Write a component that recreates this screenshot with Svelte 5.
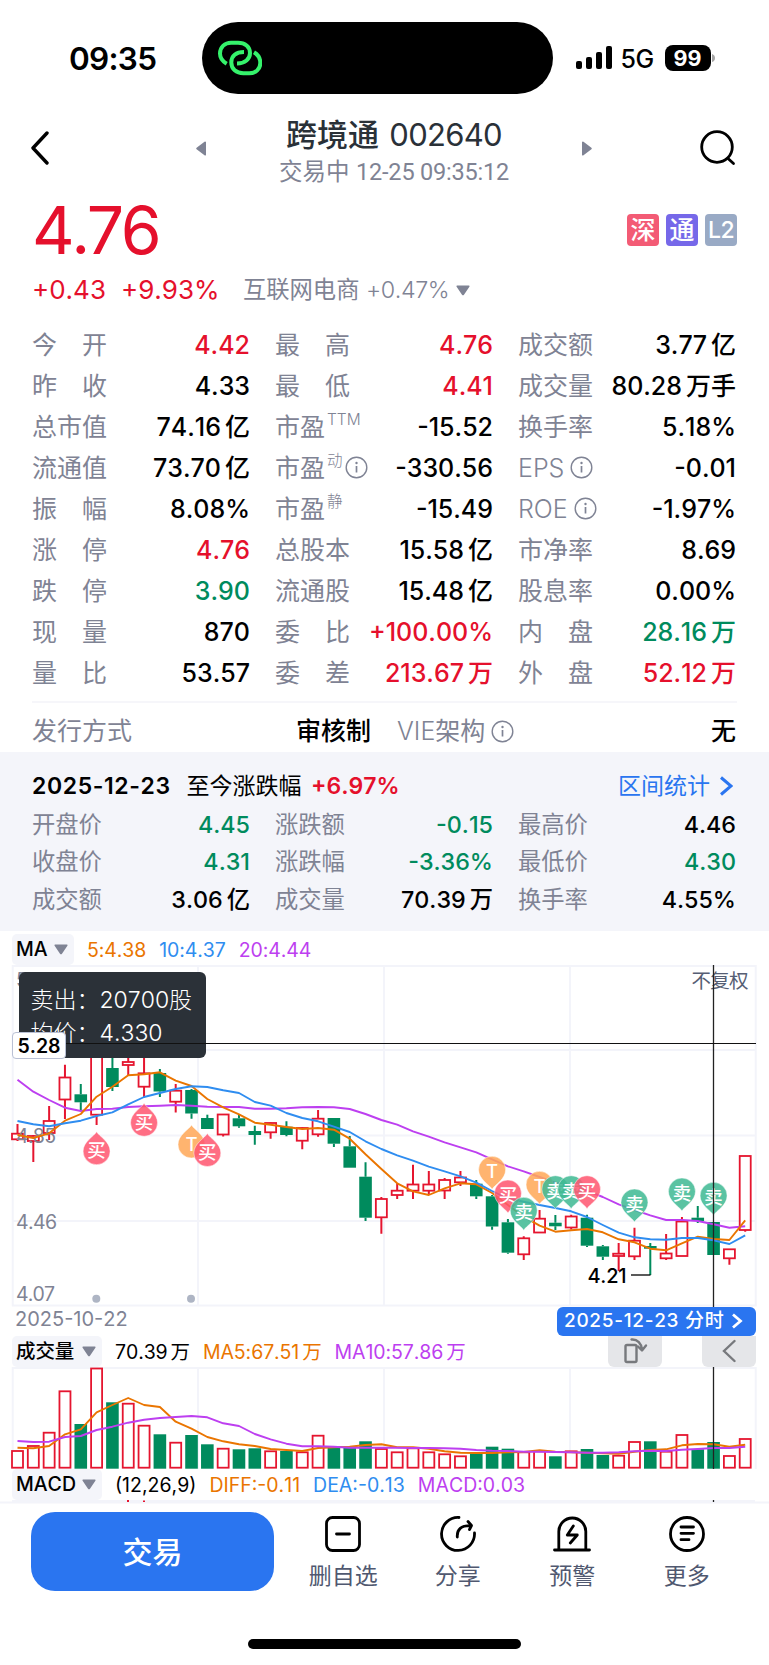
<script>
    // [label, value, colour, unit, superscript, info icon]
    let quotes = [
        ["今开", "4.42", "up"], ["最高", "4.76", "up"], ["成交额", "3.77", "", "亿"],
        ["昨收", "4.33", ""], ["最低", "4.41", "up"], ["成交量", "80.28", "", "万手"],
        ["总市值", "74.16", "", "亿"], ["市盈", "-15.52", "", "", "TTM"], ["换手率", "5.18%", ""],
        ["流通值", "73.70", "", "亿"], ["市盈", "-330.56", "", "", "动", true], ["EPS", "-0.01", "", "", "", true],
        ["振幅", "8.08%", ""], ["市盈", "-15.49", "", "", "静"], ["ROE", "-1.97%", "", "", "", true],
        ["涨停", "4.76", "up"], ["总股本", "15.58", "", "亿"], ["市净率", "8.69", ""],
        ["跌停", "3.90", "down"], ["流通股", "15.48", "", "亿"], ["股息率", "0.00%", ""],
        ["现量", "870", ""], ["委比", "+100.00%", "up"], ["内盘", "28.16", "down", "万"],
        ["量比", "53.57", ""], ["委差", "213.67", "up", "万"], ["外盘", "52.12", "up", "万"],
    ];

    let dayStats = [
        ["开盘价", "4.45", "down"], ["涨跌额", "-0.15", "down"], ["最高价", "4.46", ""],
        ["收盘价", "4.31", "down"], ["涨跌幅", "-3.36%", "down"], ["最低价", "4.30", "down"],
        ["成交额", "3.06", "", "亿"], ["成交量", "70.39", "", "万"], ["换手率", "4.55%", ""],
    ];

    // [rising, high, body top, body bottom, low, volume top]
    let candles = [
        [1, 1124, 1133.7, 1139.3, 1141, 1451], [1, 1135, 1136, 1141, 1162, 1446], [1, 1106, 1121, 1133, 1140, 1432.7],
        [1, 1064.7, 1077.5, 1099.5, 1119, 1391.3], [0, 1084, 1094.3, 1102.3, 1110, 1424], [1, 1040, 1042, 1114.7, 1125, 1368.5],
        [0, 1045, 1068, 1087, 1091, 1402.3], [1, 1050, 1062, 1065, 1075, 1403.7], [1, 1058, 1073.3, 1086.7, 1097, 1425.7],
        [0, 1069, 1073, 1091.5, 1097, 1434.3], [1, 1084, 1090.7, 1101.7, 1112.5, 1442.7], [0, 1089, 1090, 1113.5, 1118.7, 1435],
        [0, 1114.7, 1118, 1129, 1129, 1444.3], [1, 1114, 1114.5, 1134.5, 1136.5, 1448.7], [0, 1115, 1118.3, 1126.3, 1127.7, 1449.3],
        [0, 1125.7, 1131, 1135, 1144.7, 1448.3], [1, 1122.5, 1123, 1132.3, 1138.7, 1451.3], [0, 1121.3, 1126.7, 1135, 1136.3, 1451],
        [1, 1127.5, 1128, 1140.7, 1149.3, 1452.3], [1, 1110, 1118.7, 1134.3, 1136.7, 1435.7], [0, 1118, 1118, 1143.7, 1147, 1446.7],
        [0, 1136, 1146.3, 1167.7, 1167.7, 1447.7], [0, 1162.3, 1176.7, 1217.7, 1221, 1441.3], [1, 1197, 1199, 1217.3, 1233.7, 1449],
        [1, 1183.3, 1190.7, 1195, 1199, 1452.3], [1, 1164.7, 1184.5, 1190.7, 1199, 1448.3], [1, 1171, 1184.5, 1190.7, 1194, 1452.3],
        [1, 1178, 1180, 1190.5, 1199, 1454.3], [1, 1171, 1177.5, 1182.3, 1186, 1456.3], [0, 1180, 1183.7, 1196.3, 1199, 1453.3],
        [0, 1195, 1196.3, 1226.5, 1229.7, 1446.7], [0, 1219, 1222.3, 1252.7, 1253.7, 1448.7], [1, 1236.3, 1238.3, 1254.3, 1260, 1452.3],
        [1, 1210, 1218.7, 1232.5, 1232.5, 1451.3], [0, 1215, 1222.7, 1226.3, 1230, 1456.3], [1, 1214.7, 1216.5, 1227.5, 1229.5, 1451.3],
        [0, 1214.7, 1217.7, 1245.7, 1247, 1449], [0, 1245, 1246.3, 1256.7, 1260, 1455], [1, 1243, 1253.7, 1256, 1271, 1455.7],
        [1, 1227.7, 1240.7, 1256.3, 1260, 1442], [0, 1243, 1246, 1248.7, 1275, 1441.3], [1, 1234, 1253.5, 1258.3, 1260, 1451.7],
        [1, 1217, 1221.5, 1256, 1256, 1435], [0, 1206, 1217.7, 1221, 1223, 1449.3], [0, 1222, 1222, 1255, 1255, 1442],
        [1, 1249, 1249.3, 1258.3, 1264.7, 1456], [1, 1155.7, 1156, 1230, 1231.7, 1439],
    ];

    let ma5 = [1135, 1138, 1133.3, 1120.7, 1114, 1096.7, 1086.7, 1075.3, 1074.3, 1072.3, 1080.7, 1086, 1099, 1107.3, 1114.3, 1122.7, 1124.7, 1127, 1129, 1128, 1129.7, 1138.7, 1154.3, 1169, 1183.3, 1191.3, 1195, 1188.3, 1183.3, 1184.3, 1193, 1205, 1216.7, 1225.7, 1231.7, 1230.3, 1229, 1232.3, 1239.3, 1242.3, 1248.7, 1250.3, 1243.3, 1236.7, 1239, 1240, 1220.3];
    let ma10 = [1121, 1124.3, 1126.3, 1123.3, 1120.7, 1116, 1112.3, 1104.3, 1097, 1093, 1089, 1086.3, 1087, 1090.3, 1093, 1102, 1105.7, 1113, 1118, 1121.3, 1126.7, 1132, 1141.3, 1149, 1155.3, 1160.7, 1166.7, 1171.3, 1176.3, 1182.7, 1191, 1198.5, 1201.7, 1205, 1208, 1211.3, 1217, 1225, 1232.7, 1237.3, 1239.3, 1239.7, 1238, 1238, 1240.3, 1244, 1235.3];
    let ma20 = [1079.7, 1091.7, 1100, 1107.7, 1111, 1109, 1108.7, 1107, 1106.3, 1105.7, 1105, 1105.7, 1106.7, 1107, 1107, 1108.7, 1108.7, 1108.3, 1107.3, 1107, 1107.3, 1109, 1114, 1120, 1124.7, 1131.3, 1136.7, 1142.3, 1147.3, 1152.3, 1159.3, 1166.3, 1171.3, 1177, 1182.7, 1186.7, 1190.7, 1197, 1204.3, 1210, 1215.3, 1220, 1220, 1221, 1224.3, 1227.7, 1226.3];
    let vol5 = [1447.7, 1448.3, 1446, 1434.3, 1429.3, 1412.3, 1405, 1398, 1405, 1407, 1421.7, 1428.7, 1437, 1441.3, 1444.3, 1446, 1449, 1450, 1451, 1448, 1447.3, 1446.7, 1445, 1444.3, 1447.3, 1447.3, 1448.7, 1451.3, 1452.7, 1453, 1453, 1452.3, 1452, 1450.3, 1451.7, 1452.3, 1452.7, 1453.3, 1453.7, 1451.7, 1450, 1449.3, 1445.3, 1444, 1444.3, 1446.7, 1444.7];
    let vol10 = [1441, 1442, 1441.7, 1437, 1436, 1430, 1426.7, 1422.7, 1419.7, 1418, 1417, 1416, 1417.3, 1423.3, 1426, 1434, 1439.3, 1443.7, 1446.3, 1446.3, 1446.7, 1447.7, 1447.7, 1447.7, 1447.7, 1448, 1448, 1448.3, 1448.7, 1450, 1450.7, 1451, 1451.7, 1451.7, 1452, 1452.3, 1452.7, 1452.7, 1452.3, 1451.3, 1450.7, 1451, 1449.7, 1449, 1448, 1448, 1446.7];

    // index, tip y, kind, 1 when the tip points up
    let pins = [
        [5, 1131.7, "买", 1], [8, 1103.3, "买", 1], [11, 1125, "T", 1], [12, 1133.5, "买", 1],
        [30, 1189.3, "T", 0], [31, 1213, "买", 0], [32, 1230.3, "卖", 0], [33, 1204.3, "T", 0],
        [34, 1208.7, "卖", 0], [35, 1208.7, "卖", 0], [36, 1208.7, "买", 0], [39, 1222, "卖", 0],
        [42, 1211, "卖", 0], [44, 1215.3, "卖", 0],
    ];
    let pinColors = { "买": "#ff5670", "卖": "#3fb993", "T": "#ffa857" };

    const px = (i) => 17.5 + i * 15.82;
    const line = (ys) => ys.map((y, i) => `${px(i).toFixed(1)},${y}`).join(" ");
    const color = (rising) => (rising ? "#e5152f" : "#008b5d");
</script>

{#snippet info()}
    <svg class="info" width="23" height="23" viewBox="0 0 23 23">
        <circle cx="11.5" cy="11.5" r="10.3" fill="none" stroke="#7f8394" stroke-width="1.4"/>
        <path d="M11.5 10v6.5" stroke="#7f8394" stroke-width="1.7"/>
        <circle cx="11.5" cy="7" r="1.2" fill="#7f8394"/>
    </svg>
{/snippet}

{#snippet caret()}
    <svg width="14" height="11" viewBox="0 0 14 11"><path d="M1 .5h12q1 .3.4 1.2L8 9.8q-1 1-2 0L.6 1.7Q0 .8 1 .5z" fill="#7f8394"/></svg>
{/snippet}

{#snippet stat(item)}
    <div class="stat">
        <span class="label" class:pair={item[0].length == 2 && !item[4]} class:latin={item[0] == "EPS" || item[0] == "ROE"}>
            {#if item[0].length == 2 && !item[4]}
                <span>{item[0][0]}</span><span>{item[0][1]}</span>
            {:else}
                {item[0]}{#if item[4]}<sup>{item[4]}</sup>{/if}
            {/if}
            {#if item[5]}{@render info()}{/if}
        </span>
        <span class="value {item[2]}">{item[1]}{#if item[3]}<span class="unit">{item[3]}</span>{/if}</span>
    </div>
{/snippet}

<div class="page">
    <div class="status">
        <span class="clock">09:35</span>
        <div class="island">
            <svg width="44" height="36" viewBox="0 0 44 36" fill="none" stroke="#35f26b" stroke-width="4">
                <path d="M8.700 23.700C4 21 2 17 2 13.500C2 7 7 2.700 13 2.700h7c7 0 12 4 12 10.300c0 6-5 10.500-13 10.500"/>
                <path d="M26 12C18 12 13.300 16 13.300 22.500c0 6.500 5 10.800 12 10.800h6c6.500 0 11-4.300 11-10.300c0-5-2.500-8.500-6.300-10.700"/>
            </svg>
        </div>
        <svg class="signal" width="36" height="24" viewBox="0 0 36 24">
            <rect x="0" y="15" width="6" height="8" rx="2"/>
            <rect x="10" y="11" width="6" height="12" rx="2"/>
            <rect x="20" y="6" width="6" height="17" rx="2"/>
            <rect x="30" y="0" width="6" height="23" rx="2"/>
        </svg>
        <span class="net">5G</span>
        <span class="battery">99</span>
        <svg width="3" height="8" viewBox="0 0 3 8"><path d="M0 0q3 1 3 4T0 8z" fill="#a5a5a5"/></svg>
    </div>

    <div class="header">
        <svg width="20" height="34" viewBox="0 0 20 34"><path d="M17 2L3 17l14 15" fill="none" stroke="#000" stroke-width="3.4" stroke-linecap="round" stroke-linejoin="round"/></svg>
        <svg class="prev" width="10" height="15" viewBox="0 0 10 15"><path d="M10 1v13q-.6 1-1.500.3L.6 8.300q-.8-.8 0-1.600L8.500.7Q9.400 0 10 1z" fill="#7f8394"/></svg>
        <div class="title">
            <div class="name">跨境通 <span>002640</span></div>
            <div class="time">交易中 <span>12-25 09:35:12</span></div>
        </div>
        <svg class="next" width="10" height="15" viewBox="0 0 10 15"><path d="M0 1v13q.6 1 1.500.3l7.900-6q.8-.8 0-1.600L1.500.7Q.6 0 0 1z" fill="#7f8394"/></svg>
        <svg class="search" width="36" height="36" viewBox="0 0 36 36" fill="none" stroke="#000" stroke-width="2.800" stroke-linecap="round"><circle cx="17" cy="17" r="15.300"/><path d="M28 28.500l5.500 5"/></svg>
    </div>

    <div class="price-row">
        <span class="price">4.76</span>
        <div class="badges">
            <span style="background: #f35b75">深</span>
            <span style="background: #7668e9">通</span>
            <span style="background: #99aac5">L2</span>
        </div>
    </div>

    <div class="change">
        <span class="up">+0.43</span>
        <span class="up pct">+9.93%</span>
        <span class="sector">互联网电商 <span>+0.47%</span></span>
        {@render caret()}
    </div>

    <div class="grid quotes">
        {#each quotes as item}
            {@render stat(item)}
        {/each}
    </div>

    <div class="issue">
        <span class="muted">发行方式</span>
        <span class="strong">审核制</span>
        <span class="muted vie"><span class="thin">VIE</span>架构{@render info()}</span>
        <span class="strong none">无</span>
    </div>

    <div class="panel">
        <div class="range">
            <span class="date">2025-12-23</span>
            <span class="since">至今涨跌幅</span>
            <span class="up gain">+6.97%</span>
            <span class="link">区间统计
                <svg width="14" height="20" viewBox="0 0 14 20"><path d="M2 1.500l10 8.500-10 8.500" fill="none" stroke="#2a75f0" stroke-width="3"/></svg>
            </span>
        </div>
        <div class="grid day">
            {#each dayStats as item}
                {@render stat(item)}
            {/each}
        </div>
    </div>

    <div class="indicator ma">
        <span class="pick">MA {@render caret()}</span>
        <span class="orange">5:4.38</span>
        <span class="blue">10:4.37</span>
        <span class="purple">20:4.44</span>
    </div>

    <div class="chart">
        <svg width="769" height="342" viewBox="0 965 769 342">
            <g stroke="#f3f4fa" stroke-width="2" fill="none">
                <rect x="12.700" y="966" width="743" height="339.500"/>
                <path d="M12 1050h743M12 1135.500h743M12 1221h743M198 966v339M384 966v339M570 966v339"/>
            </g>
            <text class="axis" x="16" y="987" textLength="41">5.28</text>
            <text class="axis adj" x="691.500" y="988" textLength="57">不复权</text>
            {#each candles as c, i}
                <path d="M{px(i)} {c[1]}V{c[2]}M{px(i)} {c[3]}V{c[4]}" stroke={color(c[0])} stroke-width="2"/>
                <rect
                    x={px(i) - (c[0] ? 5.5 : 6.3)} y={c[2]}
                    width={c[0] ? 11 : 12.6} height={c[3] - c[2]}
                    fill={c[0] ? "#fff" : "#008b5d"} stroke={c[0] ? "#e5152f" : "none"} stroke-width="1.800"
                />
            {/each}
            <text class="axis" x="16" y="1143" textLength="40">4.85</text>
            <text class="axis" x="16" y="1228.500" textLength="41">4.46</text>
            <text class="axis" x="16" y="1300.500" textLength="39">4.07</text>
            <g fill="none" stroke-width="1.900" stroke-linejoin="round">
                <polyline points={line(ma20)} stroke="#bd3ff0"/>
                <polyline points={line(ma5)} stroke="#ea7500"/>
                <polyline points={line(ma10)} stroke="#2f8df0"/>
            </g>
            <circle cx="96.300" cy="1298.700" r="4" fill="#aeb5c4"/>
            <circle cx="191" cy="1298.700" r="4" fill="#aeb5c4"/>
            {#each pins as [i, y, kind, up]}
                <g transform="translate({px(i)} {y})">
                    <path
                        d="M0 0C-3 -5 -13.500 -10 -13.500 -19.500A13.500 13.500 0 0 1 13.500 -19.500C13.500 -10 3 -5 0 0z"
                        transform={up ? "scale(1 -1)" : ""} fill={pinColors[kind]} fill-opacity=".86" stroke="#fff" stroke-opacity=".6" stroke-width=".8"
                    />
                    <text class="pin" x="0" y={up ? 25.5 : -11}>{kind}</text>
                </g>
            {/each}
            <path d="M631 1275h19.500" stroke="#000" stroke-width="1.300"/>
            <text class="low" x="587.500" y="1282.500" textLength="39">4.21</text>
            <path d="M713.500 965v342" stroke="#222" stroke-width="1.300"/>
        </svg>
        <div class="tip">
            <div>卖出：20700股</div>
            <div>均价：4.330</div>
        </div>
        <div class="cross"></div>
        <span class="cross-price">5.28</span>
    </div>

    <div class="dates">
        <span class="start">2025-10-22</span>
        <span class="pill">2025-12-23 分时
            <svg width="12" height="16" viewBox="0 0 12 16"><path d="M2 1.500L9.500 8 2 14.500" fill="none" stroke="#fff" stroke-width="2.800"/></svg>
        </span>
    </div>

    <div class="indicator vol">
        <span class="pick wide">成交量 {@render caret()}</span>
        <span>70.39<i>万</i></span>
        <span class="orange">MA5:67.51<i>万</i></span>
        <span class="purple">MA10:57.86<i>万</i></span>
        <div class="tools">
            <span>
                <svg width="26" height="28" viewBox="0 0 26 28" fill="none" stroke="#77797d" stroke-width="2.400" stroke-linecap="round" stroke-linejoin="round">
                    <rect x="3.500" y="8" width="11" height="17" rx="1.500"/><path d="M9.500 2.500c6-.5 10 4 10.500 10M16 9.500l4 4 4-5"/>
                </svg>
            </span>
            <span>
                <svg width="14" height="24" viewBox="0 0 14 24"><path d="M12.500 2L2 12l10.500 10" fill="none" stroke="#77797d" stroke-width="2.400" stroke-linecap="round"/></svg>
            </span>
        </div>
    </div>

    <svg class="volume" width="769" height="102" viewBox="0 1367 769 102">
        <path d="M12.700 1469V1368h743v101M198 1368v101M384 1368v101M570 1368v101" fill="none" stroke="#f3f4fa" stroke-width="2"/>
        {#each candles as c, i}
            <rect
                x={px(i) - (c[0] ? 5.5 : 6.3)} y={c[5]}
                width={c[0] ? 11 : 12.6} height={(c[0] ? 1467.7 : 1468.7) - c[5]}
                fill={c[0] ? "#fff" : "#008b5d"} stroke={c[0] ? "#e5152f" : "none"} stroke-width="1.800"
            />
        {/each}
        <g fill="none" stroke-width="1.900" stroke-linejoin="round">
            <polyline points={line(vol5)} stroke="#ea7500"/>
            <polyline points={line(vol10)} stroke="#bd3ff0"/>
        </g>
        <path d="M713.500 1367v102" stroke="#222" stroke-width="1.300"/>
    </svg>

    <div class="indicator macd">
        <span class="pick wide">MACD {@render caret()}</span>
        <span>(12,26,9)</span>
        <span class="orange">DIFF:-0.11</span>
        <span class="blue">DEA:-0.13</span>
        <span class="purple">MACD:0.03</span>
    </div>
    <svg class="macd-edge" width="769" height="4" viewBox="0 1500 769 4">
        <path d="M0 1502.500h769M12 1501h743" stroke="#f3f4fa" stroke-width="2"/>
        <path d="M128 1500v2M144 1500.500v1.500" stroke="#e5152f" stroke-width="2"/>
        <path d="M713.500 1500v2" stroke="#222" stroke-width="1.300"/>
    </svg>

    <div class="footer">
        <button class="trade">交易</button>
        <div class="action">
            <svg viewBox="0 0 38 36"><rect x="2.500" y="1.500" width="33" height="33" rx="6"/><path d="M12.500 18h13"/></svg>
            <span>删自选</span>
        </div>
        <div class="action">
            <svg viewBox="0 0 38 36"><path d="M20 1.500A16.500 16.500 0 1 0 35.500 17"/><path d="M18.300 21C17.800 13.500 22 9.300 32 9.700M29 5.500l3.500 4-2 4"/></svg>
            <span>分享</span>
        </div>
        <div class="action">
            <svg viewBox="0 0 38 36"><path d="M5.800 34V15.500a13.500 13.500 0 0 1 27 0V34M1.500 34h35M20.300 10l-6 9h10l-7 8"/></svg>
            <span>预警</span>
        </div>
        <div class="action">
            <svg viewBox="0 0 38 36"><circle cx="19" cy="18" r="16.500"/><path d="M13 11h12.500M13 17.300h12.500M13 23.700h8"/></svg>
            <span>更多</span>
        </div>
    </div>
    <div class="home"></div>
</div>

<style>
    .page {
        width: 769px;
        height: 1665px;
        overflow: hidden;
        background: #fff;
        color: #000;
        font-family: Inter, "Noto Sans CJK SC", sans-serif;
        font-kerning: none;
        display: flex;
        flex-direction: column;
        white-space: nowrap;
    }
    .page > * {
        flex: none;
    }
    svg {
        display: block;
        flex: none;
    }
    .up {
        color: #e5102c;
    }
    .down {
        color: #008b5d;
    }
    .muted {
        color: #7f8394;
    }
    .orange {
        color: #ea7500;
    }
    .blue {
        color: #2f8df0;
    }
    .purple {
        color: #bd3ff0;
    }

    .status {
        height: 72px;
        padding: 22px 0 0 69px;
        display: flex;
        align-items: center;
    }
    .clock {
        width: 132.500px;
        font-size: 31.5px;
        font-weight: 600;
        letter-spacing: -0.7px;
    }
    .island {
        width: 351px;
        height: 72px;
        box-sizing: border-box;
        border-radius: 36px;
        background: #000;
        padding: 18px 16px;
    }
    .signal {
        margin-left: 23px;
    }
    .net {
        margin: 2px 0 0 9px;
        width: 44px;
        font-size: 25px;
        font-weight: 500;
        letter-spacing: -0.5px;
    }
    .battery {
        width: 46px;
        height: 26px;
        margin-right: 1px;
        border-radius: 8px;
        background: #000;
        color: #fff;
        font-size: 21.5px;
        line-height: 26px;
        font-weight: 700;
        text-align: center;
    }

    .header {
        height: 96px;
        padding: 12px 0 0 30px;
        box-sizing: border-box;
        display: flex;
        align-items: center;
        line-height: 36px;
    }
    .prev {
        margin-left: 146px;
    }
    .title {
        width: 376px;
        text-align: center;
        margin-top: 9px;
    }
    .name {
        font-size: 31px;
        font-weight: 500;
        line-height: 38px;
        color: #2a3138;
    }
    .name span {
        margin-left: 2px;
        font-size: 31px;
        letter-spacing: -0.700px;
        font-weight: 400;
    }
    .time {
        font-size: 23.500px;
        color: #7f8394;
    }
    .time span {
        font-family: Roboto, sans-serif;
        letter-spacing: -0.2px;
    }
    .search {
        margin-left: 108px;
    }

    .price-row {
        height: 80px;
        padding: 0 32px 0 32px;
        display: flex;
        align-items: center;
        justify-content: space-between;
    }
    .price {
        font-size: 66px;
        letter-spacing: -3.400px;
        line-height: 80px;
        color: #e5102c;
    }
    .badges {
        display: flex;
        gap: 7px;
    }
    .badges span {
        width: 32px;
        height: 32px;
        line-height: 32px;
        border-radius: 4px;
        color: #fff;
        font-size: 25px;
        font-weight: 500;
        text-align: center;
    }
    .badges span:last-child {
        font-size: 23px;
        letter-spacing: -0.5px;
    }

    .change {
        height: 36px;
        padding: 2px 0 0 32px;
        display: flex;
        align-items: center;
        font-size: 26px;
        line-height: 36px;
        margin-bottom: 16px;
    }
    .pct {
        margin-left: 15px;
        width: 122px;
    }
    .sector {
        width: 213px;
        font-size: 23.300px;
        color: #7f8394;
    }
    .sector span {
        font-weight: 300;
        letter-spacing: -0.400px;
    }

    .grid {
        display: grid;
        grid-template-columns: repeat(3, 218px);
        column-gap: 25px;
        margin-left: 32px;
    }
    .stat {
        display: flex;
        justify-content: space-between;
        align-items: center;
        line-height: 32px;
    }
    .quotes .stat {
        height: 41.030px;
        font-size: 25px;
    }
    .label {
        display: flex;
        align-items: center;
        color: #7f8394;
    }
    .latin, .thin, sup {
        font-weight: 300;
    }
    .pair {
        width: 75px;
        justify-content: space-between;
    }
    .value {
        font-weight: 500;
    }
    .unit {
        margin-left: 4px;
    }
    sup {
        font-size: 15.500px;
        line-height: 16px;
        margin: -14px 0 0 2px;
    }
    .info {
        margin-left: 6px;
    }
    sup + .info {
        margin-left: 2px;
    }

    .issue {
        margin: 8px 32px 0;
        border-top: 2px solid #f6f6fa;
        height: 48.730px;
        display: flex;
        align-items: center;
        font-size: 25px;
        line-height: 36px;
    }
    .issue > span {
        padding-top: 7px;
    }
    .issue .strong {
        font-weight: 500;
        margin-left: 164px;
        width: 101px;
    }
    .issue .vie {
        display: flex;
        align-items: center;
        width: 314px;
    }
    .issue .none {
        margin-left: 0;
        width: 25px;
    }

    .panel {
        height: 179px;
        background: #f4f5fa;
    }
    .range {
        display: flex;
        align-items: center;
        margin: 0 36px 0 32px;
        padding-top: 15px;
        height: 38px;
        font-size: 23px;
        line-height: 32px;
    }
    .range .date {
        font-weight: 600;
        width: 154.500px;
        letter-spacing: 0.600px;
    }
    .since {
        width: 124.500px;
    }
    .gain {
        font-weight: 600;
    }
    .link {
        margin-left: auto;
        display: flex;
        align-items: center;
        gap: 9px;
        color: #2a75f0;
    }
    .day .stat {
        height: 37.330px;
        font-size: 23.300px;
    }
    .day {
        padding-top: 1.500px;
    }

    .indicator {
        display: flex;
        align-items: flex-end;
        padding-left: 12px;
        font-size: 19.500px;
        line-height: 31px;
        letter-spacing: -0.100px;
    }
    .indicator > span {
        margin: 0 13px -1px 0;
    }
    .indicator .pick {
        height: 31px;
        box-sizing: border-box;
        width: 62px;
        margin-bottom: 0;
        padding: 1px 6px 0 4px;
        border-radius: 5px;
        background: #f4f5fa;
        display: flex;
        align-items: center;
        justify-content: space-between;
        font-weight: 500;
    }
    .indicator .wide {
        width: 90px;
    }
    .indicator i {
        font-style: normal;
        margin-left: 3px;
    }
    .ma {
        height: 34px;
    }
    .vol {
        height: 31px;
    }
    .macd {
        height: 31px;
        letter-spacing: 0;
    }
    .tools {
        margin-left: auto;
        padding-right: 13px;
        display: flex;
        gap: 40px;
    }
    .tools span {
        width: 54px;
        height: 31px;
        border-radius: 0 0 6px 6px;
        background: #e5e6e9;
        display: flex;
        align-items: center;
        justify-content: center;
    }

    .chart {
        position: relative;
        height: 342px;
    }
    .axis {
        font-size: 19.500px;
        fill: #7f8394;
    }
    .adj {
        fill: #565e74;
    }
    .pin {
        font-size: 18.500px;
        font-weight: 500;
        fill: #fff;
        text-anchor: middle;
    }
    .low {
        font-size: 20px;
        font-weight: 500;
    }
    .tip {
        position: absolute;
        left: 19px;
        top: 7px;
        width: 187px;
        height: 86px;
        box-sizing: border-box;
        padding: 12px 0 0 11.500px;
        border-radius: 6px;
        background: #2b3138;
        color: #fff;
        font-size: 23px;
        font-weight: 300;
        line-height: 33px;
    }
    .cross {
        position: absolute;
        left: 12px;
        top: 78px;
        width: 744px;
        height: 1px;
        background: #111;
    }
    .cross-price {
        position: absolute;
        left: 12px;
        top: 67px;
        width: 54px;
        height: 27px;
        box-sizing: border-box;
        border: 1px solid #b9c0d4;
        border-radius: 4px;
        background: #fff;
        font-size: 19.500px;
        font-weight: 600;
        line-height: 26px;
        text-align: center;
    }

    .dates {
        height: 29px;
        padding: 0 13px 0 15px;
        display: flex;
        align-items: center;
        justify-content: space-between;
        font-size: 20px;
        color: #7f8394;
    }
    .start {
        line-height: 24px;
        padding-bottom: 5px;
    }
    .pill {
        width: 199px;
        height: 29px;
        box-sizing: border-box;
        padding: 0 13px 0 7px;
        border-radius: 6px;
        background: #2a75f0;
        color: #fff;
        font-size: 19px;
        font-weight: 500;
        line-height: 28px;
        letter-spacing: 0.700px;
        display: flex;
        align-items: center;
        justify-content: space-between;
    }

    .footer {
        display: flex;
        align-items: flex-start;
        padding: 8px 25px 0 31px;
        height: 127px;
    }
    .trade {
        width: 243px;
        height: 79px;
        margin: 0 12px 0 0;
        padding: 0 0 2px;
        border: 0;
        border-radius: 24px;
        background: #2a75f0;
        color: #fff;
        font-family: inherit;
        font-size: 30px;
        font-weight: 500;
    }
    .action {
        width: 114.500px;
        padding-top: 4px;
        display: flex;
        flex-direction: column;
        align-items: center;
        font-size: 23px;
        line-height: 30px;
        color: #505870;
    }
    .action svg {
        width: 38px;
        height: 36px;
        margin-bottom: 9px;
        fill: none;
        stroke: #000;
        stroke-width: 2.800;
        stroke-linecap: round;
        stroke-linejoin: round;
    }
    .home {
        width: 273px;
        height: 10px;
        margin-left: 248px;
        border-radius: 5px;
        background: #000;
    }
</style>
